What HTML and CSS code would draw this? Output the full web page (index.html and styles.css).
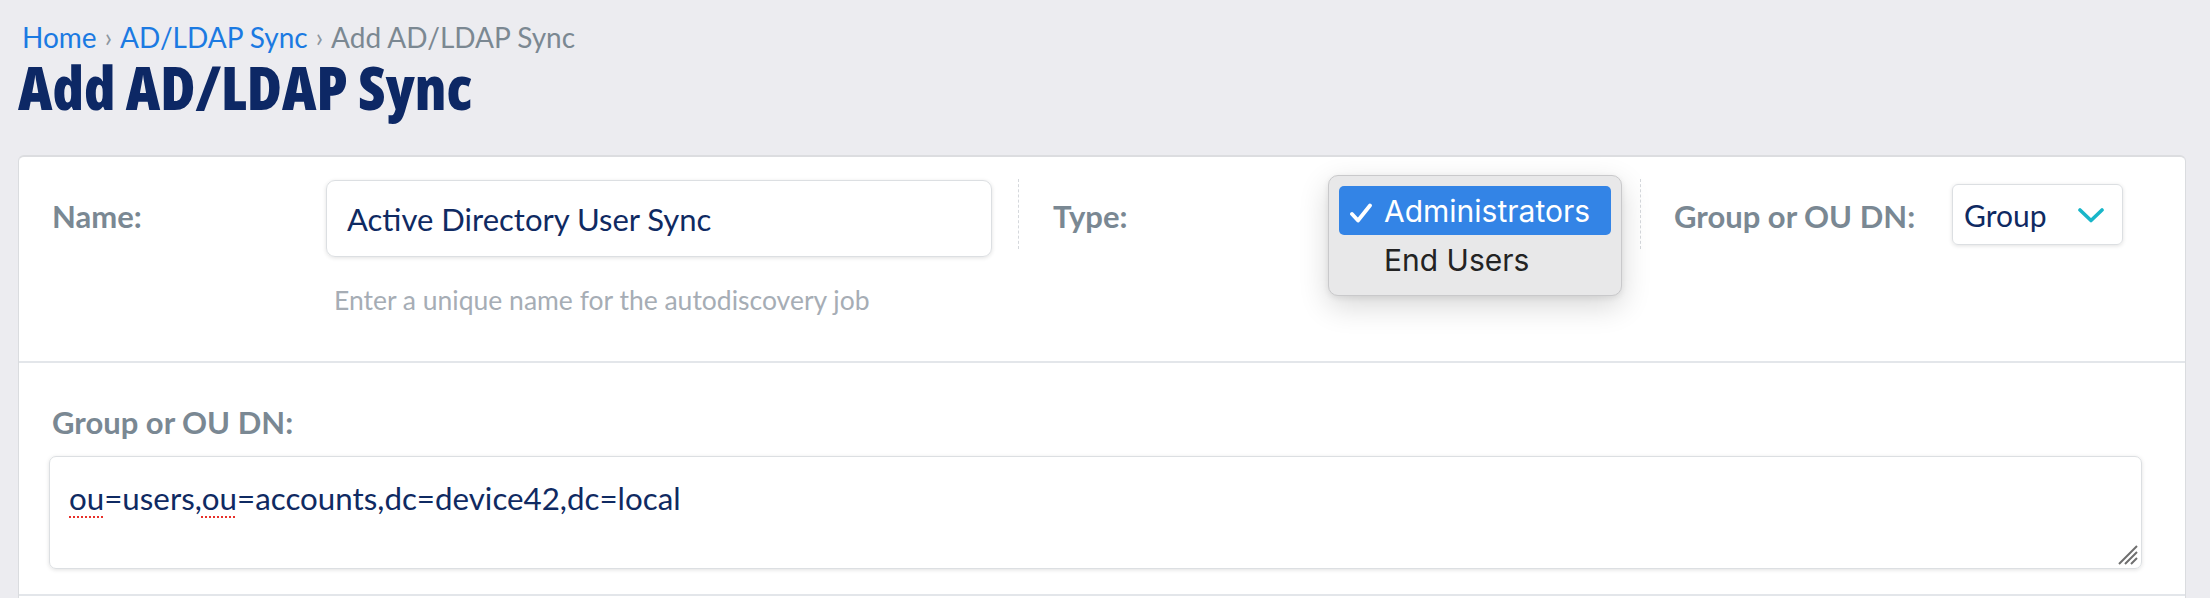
FILE: index.html
```html
<!DOCTYPE html>
<html lang="en">
<head>
<meta charset="utf-8">
<title>Add AD/LDAP Sync</title>
<link rel="stylesheet" href="styles.css">
</head>
<body>
<div class="page">
  <nav class="crumbs">
    <a class="crumb-link" href="#">Home</a>
    <span class="sep">›</span>
    <a class="crumb-link" href="#">AD/LDAP Sync</a>
    <span class="sep">›</span>
    <span class="crumb-current">Add AD/LDAP Sync</span>
  </nav>
  <h1 class="title">Add AD/LDAP Sync</h1>

  <section class="card">
    <div class="row row-top">
      <div class="label label-name">Name:</div>
      <div class="control-name">
        <div class="input">Active Directory User Sync</div>
        <div class="help">Enter a unique name for the autodiscovery job</div>
      </div>
      <div class="vdiv vdiv-1"></div>
      <div class="label label-type">Type:</div>
      <div class="select-wrap">
        <div class="menu">
          <div class="menu-item menu-item-active">
            <svg class="check" width="24" height="20" viewBox="0 0 24 20"><path d="M3 11 L9 17.5 L21 2.5" fill="none" stroke="#ffffff" stroke-width="3.8" stroke-linecap="round" stroke-linejoin="round"/></svg>
            Administrators
          </div>
          <div class="menu-item">End Users</div>
        </div>
      </div>
      <div class="vdiv vdiv-2"></div>
      <div class="label label-group">Group or OU DN:</div>
      <div class="select">
        <span class="select-value">Group</span>
        <svg class="chevron" width="26" height="15" viewBox="0 0 26 15"><path d="M2 2 L13 12.5 L24 2" fill="none" stroke="#19b6c9" stroke-width="3.6" stroke-linecap="round" stroke-linejoin="round"/></svg>
      </div>
    </div>

    <div class="row row-dn">
      <div class="label label-dn">Group or OU DN:</div>
      <div class="textarea">
        <span class="typo">ou</span>=users,<span class="typo">ou</span>=accounts,dc=device42,dc=local
        <svg class="resize" width="24" height="24" viewBox="0 0 24 24"><path d="M22 4 L4 22 M22 10 L10 22 M22 16 L16 22" stroke="#6f6f6f" stroke-width="2" fill="none"/></svg>
      </div>
    </div>

    <div class="row row-next"></div>
  </section>
</div>
</body>
</html>
```

FILE: styles.css
```css
html, body {
  margin: 0;
  padding: 0;
}
body {
  background: #ececf0;
  font-family: Lato, "Open Sans", sans-serif;
  overflow: hidden;
}
.page {
  padding: 21px 24px 0 18px;
}
.crumbs {
  padding-left: 4px;
  font-size: 28px;
  line-height: 32px;
  color: #7b8892;
  display: flex;
  gap: 8px;
  align-items: center;
}
.crumb-link {
  color: #1b7ae2;
  text-decoration: none;
}
.sep {
  color: #8c969f;
  font-size: 26px;
}
.crumb-current {
  color: #7b8892;
}
.title {
  margin: 2px 0 0 0;
  font-family: "Open Sans", sans-serif;
  font-stretch: 75%;
  font-weight: 800;
  font-size: 60px;
  line-height: 64px;
  color: #0d2865;
  letter-spacing: 0;
}
.card {
  margin-top: 36px;
  background: #ffffff;
  border: 1px solid #dadcdf;
  border-top: 2px solid #dcdde0;
  border-radius: 6px 6px 0 0;
  min-height: 500px;
}
.row-top {
  display: flex;
  align-items: flex-start;
  padding: 23px 0 0 33px;
  height: 181px;
  border-bottom: 2px solid #e3e6ea;
}
.label {
  color: #7a8893;
  font-weight: 700;
  font-size: 31px;
}
.label-name,
.label-type,
.label-group {
  line-height: 73px;
}
.label-name {
  width: 274px;
}
.control-name {
  width: 666px;
}
.input {
  box-sizing: border-box;
  height: 77px;
  border: 1px solid #dcdfe2;
  border-radius: 9px;
  box-shadow: 0 1px 4px rgba(0, 0, 0, 0.12);
  padding: 0 20px;
  display: flex;
  align-items: center;
  font-size: 31px;
  color: #0f2a62;
}
.help {
  margin-top: 30px;
  padding-left: 8px;
  font-size: 26.5px;
  line-height: 26px;
  color: #a6adb5;
}
.vdiv {
  width: 0;
  height: 70px;
  margin-top: -1px;
  border-left: 1px dashed #d5d8dc;
}
.vdiv-1 {
  margin-left: 26px;
}
.label-type {
  margin-left: 34px;
  width: 275px;
}
.select-wrap {
  position: relative;
  width: 294px;
  height: 77px;
}
.menu {
  position: absolute;
  top: -5px;
  left: 0;
  width: 294px;
  box-sizing: border-box;
  padding: 10px;
  background: #e8e8e9;
  border: 1px solid #c9c9cb;
  border-radius: 10px;
  box-shadow: 0 10px 30px rgba(0, 0, 0, 0.16), 0 2px 6px rgba(0, 0, 0, 0.08);
  font-family: Inter, "Open Sans", sans-serif;
  font-size: 30px;
  color: #232323;
  z-index: 2;
}
.menu-item {
  height: 50px;
  display: flex;
  align-items: center;
  padding-left: 45px;
  border-radius: 5px;
  position: relative;
}
.menu-item-active {
  height: 49px;
  background: #3384e6;
  color: #ffffff;
}
.check {
  position: absolute;
  left: 10px;
  top: 17px;
}
.vdiv-2 {
  margin-left: 18px;
}
.label-group {
  margin-left: 33px;
  width: 278px;
}
.select {
  box-sizing: border-box;
  margin-top: 4px;
  width: 171px;
  height: 61px;
  border: 1px solid #dcdfe2;
  border-radius: 6px;
  box-shadow: 0 1px 4px rgba(0, 0, 0, 0.12);
  display: flex;
  align-items: center;
  justify-content: space-between;
  padding: 0 18px 0 11px;
  font-size: 30px;
  color: #0f2a62;
}
.chevron {
  display: block;
  margin-top: 2px;
}
.row-dn {
  padding: 46px 43px 25px 30px;
  border-bottom: 2px solid #e3e6ea;
}
.label-dn {
  padding-left: 3px;
  line-height: 26px;
}
.textarea {
  position: relative;
  margin-top: 21px;
  box-sizing: border-box;
  height: 113px;
  border: 1px solid #dcdfe2;
  border-radius: 7px;
  box-shadow: 0 1px 4px rgba(0, 0, 0, 0.12);
  padding: 26px 19px 0 19px;
  font-size: 31.3px;
  line-height: 30px;
  color: #0f2a62;
}
.typo {
  text-decoration: underline dotted #e8302a;
  text-decoration-thickness: 2px;
  text-underline-offset: 6px;
}
.resize {
  position: absolute;
  right: 2px;
  bottom: 2px;
}
.row-next {
  height: 60px;
}
```
